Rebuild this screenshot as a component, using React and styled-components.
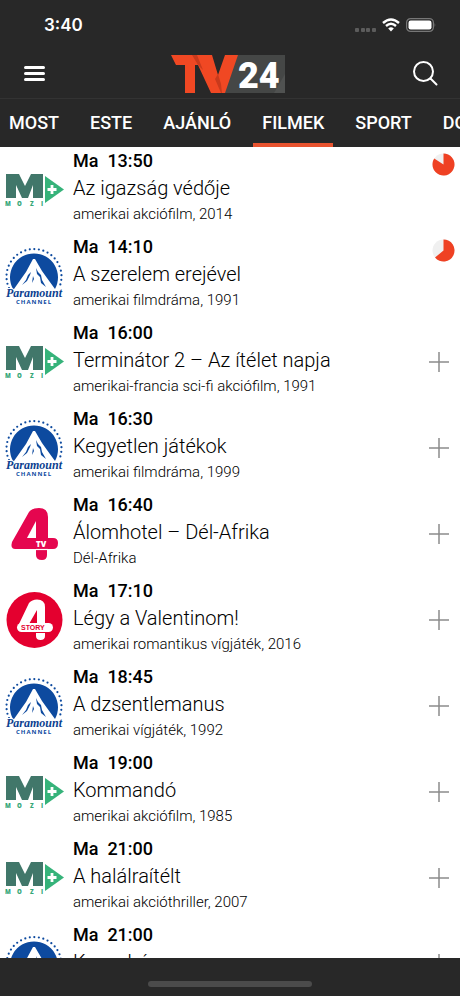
import styled, { createGlobalStyle } from 'styled-components';

const GlobalStyle = createGlobalStyle`
    * {
        box-sizing: border-box;
    }

    body {
        margin: 0;
        background: #ffffff;
        font-family: Roboto, "Liberation Sans", sans-serif;
    }

    button {
        padding: 0;
        border: none;
        background: none;
        color: inherit;
        font: inherit;
        cursor: pointer;
    }
`;

const Screen = styled.div`
    display: flex;
    flex-direction: column;
    height: 100vh;
    overflow: hidden;
`;

const Header = styled.header`
    flex: none;
    background: #282828;
    color: #ffffff;
`;

const StatusBar = styled.div`
    display: flex;
    align-items: center;
    justify-content: space-between;
    height: 50px;
    padding: 0 24px 0 44px;
`;

const Clock = styled.time`
    font-family: Inter, "Liberation Sans", sans-serif;
    font-size: 17px;
    font-weight: 600;
`;

const StatusIcons = styled.div`
    display: flex;
    align-items: center;
    gap: 6px;
`;

const NavBar = styled.div`
    display: flex;
    align-items: center;
    justify-content: space-between;
    height: 48px;
    padding: 0 22px 0 23px;
`;

const IconButton = styled.button`
    display: flex;
    align-items: center;
    justify-content: center;
`;

const Tabs = styled.nav`
    display: flex;
    gap: 13px;
    height: 49px;
    overflow: hidden;
    border-top: 1px solid #333333;
`;

const Tab = styled.a`
    flex: none;
    padding: 0 9px;
    border-bottom: 4px solid ${({ $active }) => ($active ? '#e8532f' : 'transparent')};
    color: inherit;
    font-size: 18px;
    font-weight: 500;
    line-height: 48px;
    text-decoration: none;
    white-space: nowrap;
`;

const ProgramList = styled.main`
    flex: 1;
    min-height: 0;
    overflow: hidden;
`;

const ProgramRow = styled.article`
    display: flex;
    height: 86px;
    padding: 0 5px 1px;
`;

const Logo = styled.div`
    display: flex;
    flex: none;
    align-items: center;
    width: 60px;
    margin-right: 8px;
`;

const ProgramText = styled.div`
    flex: 1;
    min-width: 0;
    padding-top: 2px;
    color: #000000;
    font-weight: 300;
`;

const StartTime = styled.div`
    font-size: 18px;
    font-weight: 500;
    line-height: 24px;
    white-space: pre;
`;

const Title = styled.h2`
    margin: 0;
    font-size: 20px;
    font-weight: 300;
    line-height: 30px;
`;

const Genre = styled.div`
    font-size: 15px;
    line-height: 22px;
`;

const Action = styled.div`
    display: flex;
    flex: none;
    align-items: ${({ $top }) => ($top ? 'flex-start' : 'center')};
    padding: ${({ $top }) => ($top ? '6px 0 0' : '0 5px 0 0')};
`;

const BottomBar = styled.footer`
    display: flex;
    flex: none;
    justify-content: center;
    height: 38px;
    padding-top: 23px;
    background: #282828;
`;

const HomeIndicator = styled.div`
    width: 164px;
    height: 6px;
    border-radius: 3px;
    background: #4b4b4b;
`;

function Signal() {
    return (
        <svg width="21" height="16" viewBox="0 0 21 16" fill="#5c5c5c">
            {[0, 6, 11, 17].map((x) => (
                <rect key={x} x={x} y="11" width="4" height="4" rx="1" />
            ))}
        </svg>
    );
}

function Wifi() {
    return (
        <svg width="18" height="14" viewBox="0 0 18 14" fill="none" stroke="#ffffff" strokeWidth="2.4">
            <path d="M1 5 Q9 -2 17 5" />
            <path d="M4 8 Q9 3.6 14 8" />
            <path d="M6.2 10.4 Q9 8 11.8 10.4 L9 13.4 Z" fill="#ffffff" stroke="none" />
        </svg>
    );
}

function Battery() {
    return (
        <svg width="30" height="14" viewBox="0 0 30 14">
            <rect x="0.6" y="0.6" width="26.8" height="12.8" rx="4" fill="none" stroke="#777777" strokeWidth="1.2" />
            <rect x="2.5" y="2.5" width="23" height="9" rx="2.2" fill="#ffffff" />
            <path d="M28.6 4.8 Q30 7 28.6 9.2 Z" fill="#777777" />
        </svg>
    );
}

function BrandLogo() {
    return (
        <svg width="116" height="40" viewBox="0 0 116 40" role="img" aria-label="TV24">
            <path d="M67 1 H115 V39 H54 Z" fill="#454746" />
            <path d="M104 39 L115 20 V39 Z" fill="#505251" />
            <path d="M1 1 H42 L48 21 L55 1 H68 L55 39 H41 L28 11 H25 V39 H15 V11 H6 Z" fill="#f04823" />
            <path d="M22 1 H27 L33 16 L28 11 Z M45 25 L48 20 L51 30 L52 39 H51 Z" fill="#c93a1c" />
            <text x="68" y="34" fill="#ffffff" fontFamily="Roboto, sans-serif" fontSize="36" fontWeight="900">24</text>
        </svg>
    );
}

function MoziLogo() {
    return (
        <svg width="60" height="36" viewBox="0 0 60 36">
            <path d="M1 2 H14 L20 14 L26 2 H38 V26 H28 V13 L23 26 H17 L11 13 V26 H1 Z" fill="#41776a" />
            <path d="M40 4 L59 17.5 L40 31 Z" fill="#36b37a" />
            <path d="M47 13 V22 M42.5 17.5 H51.5" stroke="#ffffff" strokeWidth="2.8" />
            <g fill="#36a779" fontFamily="Open Sans, sans-serif" fontSize="6" fontWeight="800">
                <text x="0" y="34">M</text>
                <text x="12" y="34">O</text>
                <text x="25" y="34">Z</text>
                <text x="36" y="34">I</text>
            </g>
        </svg>
    );
}

function ParamountLogo() {
    return (
        <svg width="60" height="60" viewBox="0 0 60 60">
            <path d="M8 43 A24 24 0 1 1 50 43 Z" fill="#0d4a9f" />
            <path d="M9 43 L16 33 L21 26 L28 13 L30 13 L37 25 L42 32 L50 43 Z" fill="#ffffff" />
            <path
                d="M28 20 L26 26 L23 29 L21 34 L17 39 L22 35 L25 29 Z M31 22 L32 28 L35 31 L36 37 L41 41 L37 34 L36 29 L33 26 Z M28 30 L27 37 L29 33 Z"
                fill="#0d4a9f"
            />
            <path
                d="M4 42 A27.500 27.500 0 1 1 54 42"
                fill="none"
                stroke="#0d4a9f"
                strokeWidth="2.2"
                strokeLinecap="round"
                strokeDasharray="0 4.6"
            />
            <text
                x="1"
                y="51"
                fill="#0d3f8f"
                stroke="#ffffff"
                strokeWidth="2"
                paintOrder="stroke"
                fontFamily="Liberation Serif, serif"
                fontSize="12"
                fontStyle="italic"
                fontWeight="700"
            >
                Paramount
            </text>
            <text x="11" y="58" fill="#0d4a9f" fontFamily="Open Sans, sans-serif" fontSize="6" fontWeight="700" letterSpacing="1">
                CHANNEL
            </text>
        </svg>
    );
}

function Tv4Logo() {
    return (
        <svg width="60" height="60" viewBox="0 0 60 60">
            <path
                d="M24 8 Q27 4 34 4 Q43 4 43 13 V34 H48 Q53 34 53 39 Q53 45 48 45 H42 V51 Q42 56 37 56 Q31 56 31 51 V45 H10 Q5 45 7 38 Z"
                fill="#e5064f"
            />
            <path d="M31 17 V34 H22 Z" fill="#ffffff" />
            <path d="M31 45.5 H43" stroke="#ffffff" strokeWidth="1.2" />
            <text x="31" y="42.5" fill="#ffffff" fontFamily="Open Sans, sans-serif" fontSize="8" fontWeight="800">TV</text>
        </svg>
    );
}

function Story4Logo() {
    return (
        <svg width="60" height="60" viewBox="0 0 60 60">
            <circle cx="29.5" cy="30" r="28" fill="#e4002f" />
            <path
                d="M24 13 Q27 9.5 32 9.5 Q40 9.5 40 17 V34 H32 V20 L24 34 H14 Z M31 42 H40 V46 Q40 50 35.5 50 Q31 50 31 46 Z"
                fill="#ffffff"
            />
            <rect x="12" y="33" width="36" height="9" rx="4.5" fill="#ffffff" />
            <path d="M31 42.5 H40" stroke="#e4002f" strokeWidth="1" />
            <text x="16" y="40" fill="#e4002f" fontFamily="Liberation Sans, sans-serif" fontSize="7" fontWeight="700">STORY</text>
        </svg>
    );
}

function Progress({ value }) {
    const angle = value * 2 * Math.PI;
    const x = 11.5 + 11 * Math.sin(angle);
    const y = 11.5 - 11 * Math.cos(angle);

    return (
        <svg width="23" height="23" viewBox="0 0 23 23">
            <circle cx="11.5" cy="11.5" r="11" fill="#f0f0f0" />
            <path d={`M11.5 11.5 V0.5 A11 11 0 1 1 ${x} ${y} Z`} fill="#ef4123" />
        </svg>
    );
}

const logos = {
    mozi: MoziLogo,
    paramount: ParamountLogo,
    tv4: Tv4Logo,
    story4: Story4Logo,
};

const tabs = ['MOST', 'ESTE', 'AJÁNLÓ', 'FILMEK', 'SPORT', 'DOKU'];

const programs = [
    { channel: 'mozi', time: '13:50', title: 'Az igazság védője', genre: 'amerikai akciófilm, 2014', progress: 0.84 },
    { channel: 'paramount', time: '14:10', title: 'A szerelem erejével', genre: 'amerikai filmdráma, 1991', progress: 0.64 },
    { channel: 'mozi', time: '16:00', title: 'Terminátor 2 – Az ítélet napja', genre: 'amerikai-francia sci-fi akciófilm, 1991' },
    { channel: 'paramount', time: '16:30', title: 'Kegyetlen játékok', genre: 'amerikai filmdráma, 1999' },
    { channel: 'tv4', time: '16:40', title: 'Álomhotel – Dél-Afrika', genre: 'Dél-Afrika' },
    { channel: 'story4', time: '17:10', title: 'Légy a Valentinom!', genre: 'amerikai romantikus vígjáték, 2016' },
    { channel: 'paramount', time: '18:45', title: 'A dzsentlemanus', genre: 'amerikai vígjáték, 1992' },
    { channel: 'mozi', time: '19:00', title: 'Kommandó', genre: 'amerikai akciófilm, 1985' },
    { channel: 'mozi', time: '21:00', title: 'A halálraítélt', genre: 'amerikai akcióthriller, 2007' },
    { channel: 'paramount', time: '21:00', title: 'Kacsaház' },
];

function Program({ program }) {
    const ChannelLogo = logos[program.channel];

    return (
        <ProgramRow>
            <Logo>
                <ChannelLogo />
            </Logo>
            <ProgramText>
                <StartTime>{`Ma  ${program.time}`}</StartTime>
                <Title>{program.title}</Title>
                {program.genre ? <Genre>{program.genre}</Genre> : null}
            </ProgramText>
            <Action $top={Boolean(program.progress)}>
                {program.progress ? (
                    <Progress value={program.progress} />
                ) : (
                    <IconButton aria-label="Hozzáadás">
                        <svg width="22" height="22" viewBox="0 0 22 22" stroke="#8c8c8c" strokeWidth="1.5">
                            <path d="M11 1 V21 M1 11 H21" />
                        </svg>
                    </IconButton>
                )}
            </Action>
        </ProgramRow>
    );
}

export default function App() {
    return (
        <Screen>
            <GlobalStyle />
            <Header>
                <StatusBar>
                    <Clock>3:40</Clock>
                    <StatusIcons>
                        <Signal />
                        <Wifi />
                        <Battery />
                    </StatusIcons>
                </StatusBar>
                <NavBar>
                    <IconButton aria-label="Menü">
                        <svg width="22" height="18" viewBox="0 0 22 18" stroke="#ffffff" strokeWidth="3" strokeLinecap="round">
                            <path d="M2.5 2.5 H20.5 M2.5 8.5 H20.5 M2.5 14.5 H20.5" />
                        </svg>
                    </IconButton>
                    <BrandLogo />
                    <IconButton aria-label="Keresés">
                        <svg width="28" height="28" viewBox="0 0 28 28" fill="none" stroke="#ffffff" strokeWidth="2" strokeLinecap="round">
                            <circle cx="13.5" cy="11.5" r="9.5" />
                            <path d="M20.5 18.5 L26.5 24.5" />
                        </svg>
                    </IconButton>
                </NavBar>
                <Tabs>
                    {tabs.map((tab) => (
                        <Tab key={tab} href="#" $active={tab === 'FILMEK'}>{tab}</Tab>
                    ))}
                </Tabs>
            </Header>
            <ProgramList>
                {programs.map((program) => (
                    <Program key={program.channel + program.time} program={program} />
                ))}
            </ProgramList>
            <BottomBar>
                <HomeIndicator />
            </BottomBar>
        </Screen>
    );
}
